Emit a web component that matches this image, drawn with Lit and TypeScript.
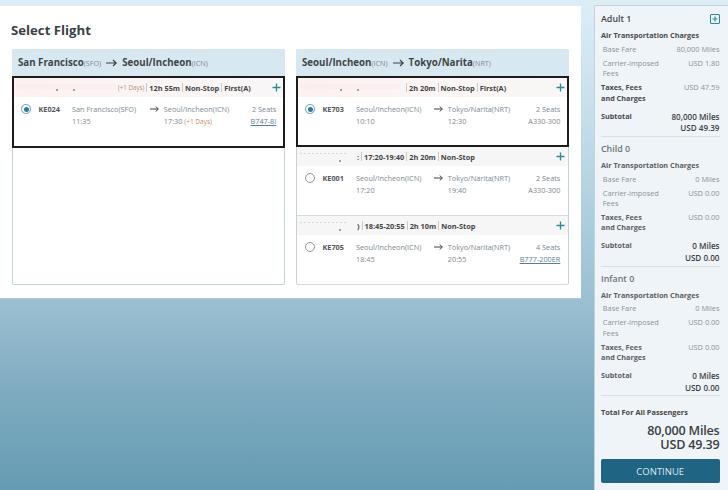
import { LitElement, html, css, nothing } from "lit";
import { customElement } from "lit/decorators.js";

interface Flight {
  top: unknown; code: string; from: string; to: string; dep: string; arr: string; plus?: boolean;
  seats: string; craft: string; link?: boolean; selected?: boolean; h: number;
}

const arrow = (w = 11) => html`<svg class="arrow" width=${w} height="8" viewBox="0 0 11 8"><path d="M0 4H10M7 1L10.2 4L7 7" fill="none" stroke="#3a3f44" stroke-width="1.2"/></svg>`;

const sep = html`<span class="sep"></span>`;

@customElement("app-root")
export class AppRoot extends LitElement {
  static styles = css`
    :host { display: block; width: 728px; height: 490px; overflow: hidden; font-family: "Open Sans", sans-serif; color: #444;
      background: linear-gradient(180deg, #dcedf5 0, #dcedf5 5px, #c4deea 120px, #9cc0d2 298px, #7fabc0 390px, #659cb4 490px); }
    .page { display: flex; align-items: flex-start; height: 490px; }
    .main { width: 581px; height: 293px; margin-top: 6px; background: #fff; border-bottom: 1px solid #b7c6cc; box-sizing: border-box; padding: 11px 12px 0 12px; flex: none; }
    h1 { margin: 0 0 5px -1px; font-size: 13.2px; line-height: 27px; font-weight: 700; color: #3a3f44; }
    .cols { display: grid; grid-template-columns: 273px 273px; gap: 11px; }
    .card { height: 236px; box-sizing: border-box; border: 1px solid #c4d3d6; border-radius: 2px; display: flex; flex-direction: column; }
    .head { height: 27px; margin: -1px -1px 0; background: #d8e8f0; border-radius: 2px 2px 0 0; display: flex; align-items: center; gap: 5px; padding: 0 6px; font-size: 9.7px; font-weight: 700; color: #3f4448; white-space: nowrap; flex: none; }
    .head small { font-size: 7.2px; font-weight: 400; color: #7c8a93; margin-left: -5px; padding-top: 1px; }
    .flight { box-sizing: border-box; border-bottom: 1px solid #d5dcdf; flex: none; }
    .flight.sel { border: 2px solid #1c1c1c; margin: 0 -1px; }
    .bar { height: 19px; background: #f6f6f6; display: flex; align-items: center; font-size: 7.35px; font-weight: 700; color: #444; white-space: nowrap; padding: 0 3.5px 0 3px; }
    .sel .bar { background: linear-gradient(90deg, #fdf1f1 0, #fbf4f4 35%, #f8f6f6 100%); padding: 0 2.5px 0 2px; }
    .mask { display: block; height: 12px; flex: none; }
    .mask.pink { background:
      radial-gradient(circle, #a0a0a0 .7px, transparent 1px) no-repeat 40px 7px / 2px 2px,
      radial-gradient(circle, #a0a0a0 .7px, transparent 1px) no-repeat 57px 7px / 2px 2px,
      linear-gradient(#fceeee, #fceeee) no-repeat 0 2px / 100% 5px; }
    .mask.dash { background:
      radial-gradient(circle, #a0a0a0 .7px, transparent 1px) no-repeat 39px 9px / 2px 2px,
      repeating-linear-gradient(90deg, #d4d4d4 0 2px, transparent 2px 4px) no-repeat 0 2px / 100% 1px; }
    .days { color: #c98a70; font-weight: 400; font-size: 6.2px; }
    .sep { display: inline-block; width: 1px; height: 9px; background: #c9c9c9; margin: 0 2px; flex: none; }
    .plus { margin-left: auto; width: 9px; height: 9px; display: block; flex: none; }
    .row { display: grid; grid-template-columns: 17.5px 33.5px 78.3px 13.5px 1fr auto; padding: 5.5px 7.7px 0 8px; font-size: 7.3px; line-height: 12.7px; color: #7d8890; white-space: nowrap; }
    .sel .row { padding: 5.5px 6.7px 0 7px; }
    .radio { width: 8px; height: 8px; border: 1px solid #8e979c; border-radius: 50%; display: flex; align-items: center; justify-content: center; margin-top: 1.5px; background: #fff; box-sizing: content-box; }
    .sel .radio { border-color: #7fa9bd; box-shadow: 0 0 1px #a9cfe0; }
    .radio i { width: 5px; height: 5px; border-radius: 50%; background: #2c7b97; display: block; }
    .code { font-weight: 700; color: #555; }
    .right { text-align: right; }
    .link { color: #5d7f95; text-decoration: underline; }
    .arrowcell { display: flex; height: 12.7px; align-items: center; }
    .orange { color: #c98a70; font-size: 6.5px; }

    .side { margin-left: 13px; margin-top: 5px; width: 134px; flex: none; height: 490px; box-sizing: border-box; background: #eff4f8; border: 1px solid #c3d3db; border-right: 0; border-radius: 2px 0 0 0; padding: 6px 0 0 6px; }
    .inner { width: 118.5px; }
    .pax { font-size: 8.9px; font-weight: 600; line-height: 14px; color: #3f4448; display: flex; justify-content: space-between; align-items: center; margin-top: 5px; }
    .pax.zero { color: #6d7478; }
    .pax.first { margin-top: 0; }
    .box { width: 8px; height: 8px; border: 1px solid #2b8a99; border-radius: 1px; display: flex; }
    .air { font-size: 7.25px; font-weight: 700; color: #47494d; line-height: 11px; margin-top: 4.2px; }
    .air.zero { color: #5c6064; }
    .line { display: flex; justify-content: space-between; font-size: 7.4px; line-height: 10.4px; color: #8a9298; padding-left: 1.8px; margin-top: 3.6px; }
    .line.base { margin-top: 2.6px; }
    .line.tax { padding-left: 0; margin-top: 3.5px; }
    .line.tax b { font-weight: 700; color: #47494d; font-size: 7.25px; }
    .zero-sec .line.tax b { color: #5c6064; }
    .sub { display: flex; justify-content: space-between; margin-top: 7.6px; font-size: 7.25px; font-weight: 700; color: #47494d; line-height: 11.5px; padding-bottom: 2.25px; }
    .sub .val { text-align: right; font-size: 8.1px; font-weight: 600; color: #3a3f44; }
    .zero-sec .sub > span:first-child { color: #5c6064; }
    .sec { border-bottom: 1px solid #d8dfe3; }
    .total { font-size: 7.35px; font-weight: 700; color: #444; line-height: 11px; margin-top: 11px; }
    .big { text-align: right; font-size: 12.6px; line-height: 14.7px; font-weight: 600; color: #3a3f44; margin-top: 5.5px; letter-spacing: -.2px; }
    .btn { margin-top: 6.3px; height: 24px; background: #1f6482; border-radius: 2px; color: #dbe8ee; font-size: 9.5px; display: flex; align-items: center; justify-content: center; }
  `;

  private flight(f: Flight) {
    return html`<div class="flight ${f.selected ? "sel" : ""}" style="height:${f.h}px">
      <div class="bar">${f.top}<svg class="plus" viewBox="0 0 9 9"><path d="M4.5 .5V8.5M.5 4.5H8.5" stroke="#2b8a99" stroke-width="1.3"/></svg></div>
      <div class="row">
        <span class="radio">${f.selected ? html`<i></i>` : nothing}</span>
        <span class="code">${f.code}</span>
        <span>${f.from}<br />${f.dep}</span>
        <span class="arrowcell">${arrow(9)}</span>
        <span>${f.to}<br />${f.arr}${f.plus ? html` <span class="orange">(+1 Days)</span>` : nothing}</span>
        <span class="right">${f.seats}<br /><span class=${f.link ? "link" : ""}>${f.craft}</span></span>
      </div>
    </div>`;
  }

  private section(name: string, n: number, miles: string, c: string, t: string, s: string, first = false) {
    return html`<div class="sec ${n ? "" : "zero-sec"}">
      <div class="pax ${n ? "" : "zero"} ${first ? "first" : ""}"><span>${name} ${n}</span>
        ${first ? html`<span class="box"><svg width="8" height="8" viewBox="0 0 8 8"><path d="M4 1.5V6.5M1.5 4H6.5" stroke="#2b8a99" stroke-width="1.2"/></svg></span>` : nothing}</div>
      <div class="air ${n ? "" : "zero"}">Air Transportation Charges</div>
      <div class="line base"><span>Base Fare</span><span>${miles}</span></div>
      <div class="line"><span>Carrier-imposed<br />Fees</span><span>${c}</span></div>
      <div class="line tax"><b>Taxes, Fees<br />and Charges</b><span>${t}</span></div>
      <div class="sub"><span>Subtotal</span><span class="val">${miles}<br />${s}</span></div>
    </div>`;
  }

  render() {
    const mask = (w: number, k: string) => html`<span class="mask ${k}" style="width:${w}px"></span>`;
    const gap = (w: number) => html`<span style="width:${w}px;flex:none"></span>`;
    const left: Flight[] = [{
      top: html`${mask(100, "pink")}${gap(2)}<span class="days">(+1 Days)</span>${sep}12h 55m${sep}Non-Stop${sep}First(A)`,
      code: "KE024", from: "San Francisco(SFO)", to: "Seoul/Incheon(ICN)", dep: "11:35", arr: "17:30", plus: true,
      seats: "2 Seats", craft: "B747-8I", link: true, selected: true, h: 72,
    }];
    const right: Flight[] = [
      { top: html`${mask(100, "pink")}${gap(4)}${sep}2h 20m${sep}Non-Stop${sep}First(A)`, code: "KE703", from: "Seoul/Incheon(ICN)", to: "Tokyo/Narita(NRT)", dep: "10:10", arr: "12:30", seats: "2 Seats", craft: "A330-300", selected: true, h: 71 },
      { top: html`${mask(48, "dash")}${gap(9)}:${sep}17:20-19:40${sep}2h 20m${sep}Non-Stop`, code: "KE001", from: "Seoul/Incheon(ICN)", to: "Tokyo/Narita(NRT)", dep: "17:20", arr: "19:40", seats: "2 Seats", craft: "A330-300", h: 69 },
      { top: html`${mask(48, "dash")}${gap(9)})${sep}18:45-20:55${sep}2h 10m${sep}Non-Stop`, code: "KE705", from: "Seoul/Incheon(ICN)", to: "Tokyo/Narita(NRT)", dep: "18:45", arr: "20:55", seats: "4 Seats", craft: "B777-200ER", link: true, h: 69 },
    ];
    return html`<div class="page">
      <div class="main">
        <h1>Select Flight</h1>
        <div class="cols">
          <div class="card">
            <div class="head"><span>San Francisco</span><small>(SFO)</small>${arrow()}<span>Seoul/Incheon</span><small>(ICN)</small></div>
            ${left.map((f) => this.flight(f))}
          </div>
          <div class="card">
            <div class="head"><span>Seoul/Incheon</span><small>(ICN)</small>${arrow()}<span>Tokyo/Narita</span><small>(NRT)</small></div>
            ${right.map((f) => this.flight(f))}
          </div>
        </div>
      </div>
      <aside class="side"><div class="inner">
        ${this.section("Adult", 1, "80,000 Miles", "USD 1.80", "USD 47.59", "USD 49.39", true)}
        ${this.section("Child", 0, "0 Miles", "USD 0.00", "USD 0.00", "USD 0.00")}
        ${this.section("Infant", 0, "0 Miles", "USD 0.00", "USD 0.00", "USD 0.00")}
        <div class="total">Total For All Passengers</div>
        <div class="big">80,000 Miles<br />USD 49.39</div>
        <div class="btn">CONTINUE</div>
      </div></aside>
    </div>`;
  }
}
